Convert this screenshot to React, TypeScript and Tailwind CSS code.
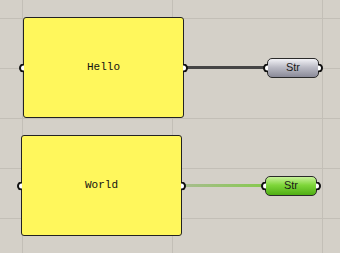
import React from "react"

function Port({ side }: { side: "left" | "right" }) {
  return (
    <div
      className={`absolute top-1/2 h-[9px] w-[5px] -translate-y-1/2 border-2 border-[#111] bg-white ${
        side === "left"
          ? "left-[-5px] rounded-l-full border-r-0"
          : "right-[-5px] rounded-r-full border-l-0"
      }`}
    />
  )
}

function Panel({ text }: { text: string }) {
  return (
    <div className="relative flex h-[101px] w-[161px] shrink-0 items-center justify-center rounded-[3px] border border-[#222] bg-[#fff75c]">
      <Port side="left" />
      <span className="font-['Liberation_Mono',monospace] text-[11px] text-[#111]">{text}</span>
      <Port side="right" />
    </div>
  )
}

function StrNode({ green }: { green?: boolean }) {
  return (
    <div
      className={`relative flex h-[20px] w-[52px] shrink-0 items-center justify-center rounded-[5px] border border-[#2a2a2a] ${
        green
          ? "bg-[linear-gradient(#c8f29a_0%,#7fd63a_45%,#4fae14_100%)]"
          : "bg-[linear-gradient(#f2f2f6_0%,#bcbcc6_45%,#8a8a98_100%)]"
      }`}
    >
      <Port side="left" />
      <span className="font-['Liberation_Sans',sans-serif] text-[11px] text-[#1a1a1a]">Str</span>
      <Port side="right" />
    </div>
  )
}

export default function App() {
  return (
    <div className="flex h-[253px] w-[340px] flex-col gap-[17px] overflow-hidden bg-[#d4d0c8] bg-[linear-gradient(90deg,#c3bfb7_1px,transparent_1px),linear-gradient(#c3bfb7_1px,transparent_1px)] bg-[size:150px_50px] bg-[position:22px_18px] pt-[17px]">
      <div className="flex items-center pl-[23px]">
        <Panel text="Hello" />
        <div className="h-[3px] w-[83px] bg-[#454545]" />
        <StrNode />
      </div>
      <div className="flex items-center pl-[21px]">
        <Panel text="World" />
        <div className="h-[3px] w-[83px] bg-[linear-gradient(90deg,#a8bc90,#86c94e)]" />
        <StrNode green />
      </div>
    </div>
  )
}
